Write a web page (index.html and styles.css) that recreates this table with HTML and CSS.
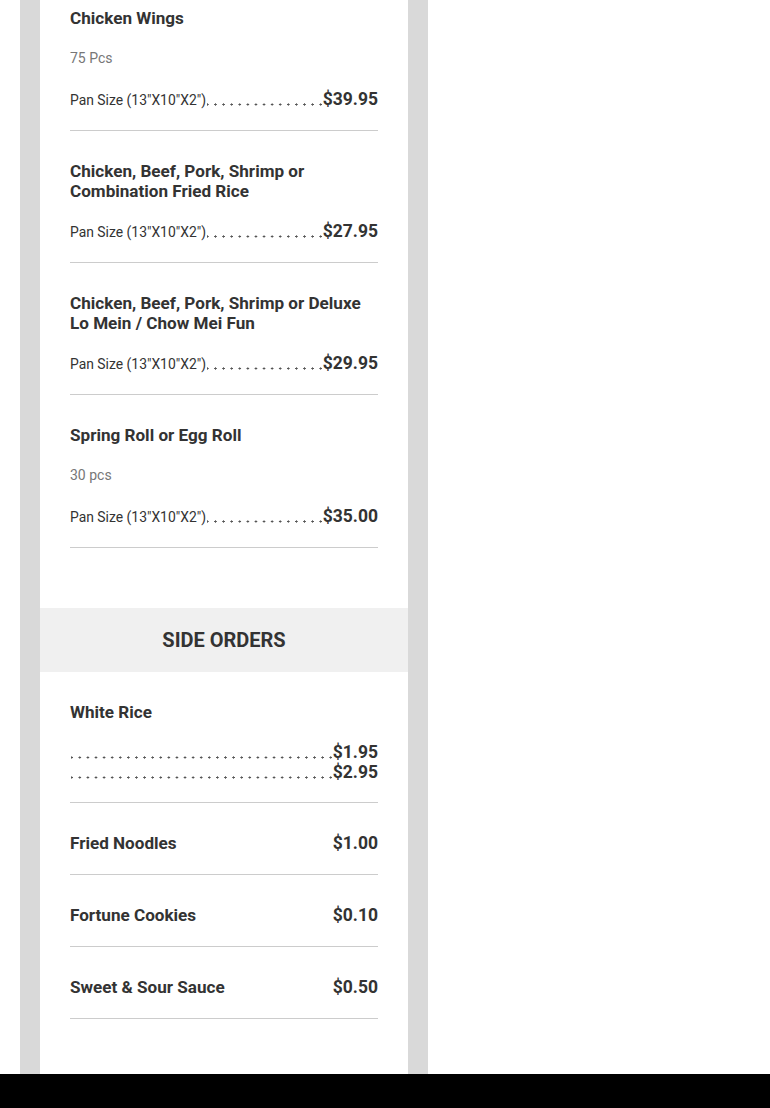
FILE: index.html
```html
<!DOCTYPE html>
<html lang="en">
<head>
<meta charset="utf-8">
<title>Menu</title>
<link rel="stylesheet" href="styles.css">
</head>
<body>
<div class="page">
  <div class="column">
    <div class="card">
      <section class="section">
        <div class="item first">
          <h3 class="title">Chicken Wings</h3>
          <p class="sub">75 Pcs</p>
          <div class="row"><span class="label">Pan Size (13"X10"X2")</span><span class="dots"></span><span class="price">$39.95</span></div>
        </div>
        <div class="item">
          <h3 class="title">Chicken, Beef, Pork, Shrimp or Combination Fried Rice</h3>
          <div class="row"><span class="label">Pan Size (13"X10"X2")</span><span class="dots"></span><span class="price">$27.95</span></div>
        </div>
        <div class="item">
          <h3 class="title">Chicken, Beef, Pork, Shrimp or Deluxe Lo Mein / Chow Mei Fun</h3>
          <div class="row"><span class="label">Pan Size (13"X10"X2")</span><span class="dots"></span><span class="price">$29.95</span></div>
        </div>
        <div class="item">
          <h3 class="title">Spring Roll or Egg Roll</h3>
          <p class="sub">30 pcs</p>
          <div class="row"><span class="label">Pan Size (13"X10"X2")</span><span class="dots"></span><span class="price">$35.00</span></div>
        </div>
      </section>

      <h2 class="band">SIDE ORDERS</h2>

      <section class="section">
        <div class="item">
          <h3 class="title">White Rice</h3>
          <div class="row tight"><span class="label"></span><span class="dots"></span><span class="price">$1.95</span></div>
          <div class="row tight"><span class="label"></span><span class="dots"></span><span class="price">$2.95</span></div>
        </div>
        <div class="item simple">
          <h3 class="title">Fried Noodles</h3><span class="price">$1.00</span>
        </div>
        <div class="item simple">
          <h3 class="title">Fortune Cookies</h3><span class="price">$0.10</span>
        </div>
        <div class="item simple">
          <h3 class="title">Sweet &amp; Sour Sauce</h3><span class="price">$0.50</span>
        </div>
      </section>
    </div>
  </div>
</div>
<div class="footer-bar"></div>
</body>
</html>
```

FILE: styles.css
```css
* { box-sizing: border-box; }
html, body {
  margin: 0;
  padding: 0;
  background: #fff;
  font-family: Roboto, "Liberation Sans", Arial, sans-serif;
  color: #333;
}
.page {
  padding-left: 20px;
}
.column {
  width: 408px;
  background: #d9d9d9;
  padding: 0 20px;
}
.card {
  background: #fff;
  padding-bottom: 80px;
}
.section {
  padding: 0 30px 60px;
}
.section:last-child {
  padding-bottom: 0;
}
.item {
  padding: 30px 0 20px;
  border-bottom: 1px solid #cccccc;
}
.item.first {
  padding-top: 8px;
}
.title {
  margin: 0;
  font-size: 17.1px;
  line-height: 20px;
  font-weight: 700;
  color: #333;
}
.sub {
  margin: 20px 0 0;
  font-size: 14px;
  line-height: 21px;
  color: #777;
}
.row {
  display: flex;
  align-items: baseline;
  margin-top: 20px;
  height: 21px;
  line-height: 21px;
}
.row.tight {
  height: 20px;
  line-height: 20px;
}
.row.tight + .row.tight {
  margin-top: 0;
}
.label {
  font-size: 13.9px;
  color: #333;
  white-space: nowrap;
}
.dots {
  flex: 1;
  align-self: stretch;
  margin-left: 1px;
  background-image: radial-gradient(circle, #555 0.9px, rgba(85,85,85,0) 1.3px);
  background-size: 8.1px 3px;
  background-repeat: repeat-x;
  background-position: right -2px bottom 4px;
}
.tight .dots {
  margin-left: 1px;
  background-position: right -2px bottom 3px;
}
.price {
  font-size: 17.5px;
  font-weight: 700;
  color: #333;
  white-space: nowrap;
}
.item.simple {
  display: flex;
  justify-content: space-between;
  align-items: center;
  height: 72px;
}
.item.simple .title,
.item.simple .price {
  line-height: 21px;
}
.band {
  margin: 0;
  height: 64px;
  background: #f0f0f0;
  font-size: 20px;
  line-height: 64px;
  font-weight: 700;
  text-align: center;
  color: #333;
}
.footer-bar {
  position: fixed;
  left: 0;
  right: 0;
  bottom: 0;
  height: 34px;
  background: #000;
}
```
